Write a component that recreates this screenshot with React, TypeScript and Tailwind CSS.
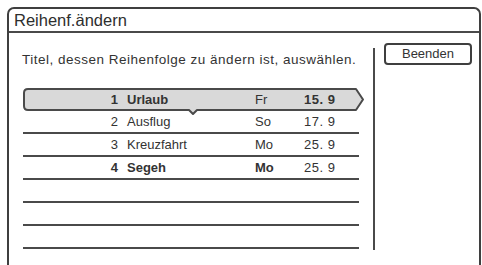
const rows = [
  { no: 1, name: "Urlaub", day: "Fr", date: "15. 9", boldName: true, boldDay: false, boldDate: true },
  { no: 2, name: "Ausflug", day: "So", date: "17. 9", boldName: false, boldDay: false, boldDate: false },
  { no: 3, name: "Kreuzfahrt", day: "Mo", date: "25. 9", boldName: false, boldDay: false, boldDate: false },
  { no: 4, name: "Segeh", day: "Mo", date: "25. 9", boldName: true, boldDay: true, boldDate: false },
];

function Highlight() {
  return (
    <svg
      className="absolute left-0 top-0 overflow-visible"
      width="342"
      height="24"
      viewBox="0 0 342 24"
    >
      <path
        d="M5 1 H333 L340 11.5 L333 22 H174 L170 26 L166 22 H5 Q1 22 1 18 V5 Q1 1 5 1 Z"
        fill="#d9d9d9"
        stroke="#4a4a4a"
        strokeWidth="2"
        strokeLinejoin="round"
      />
    </svg>
  );
}

function Row({ r, selected }: { r: (typeof rows)[number]; selected: boolean }) {
  return (
    <div
      className={
        "relative flex h-[23px] items-center text-[13px] text-[#333] " +
        (selected ? "" : "border-b-2 border-[#4a4a4a]")
      }
    >
      {selected && <Highlight />}
      <span className={"relative w-[95px] text-right " + (r.boldName ? "font-bold" : "")}>{r.no}</span>
      <span className={"relative ml-[9px] w-[128px] " + (r.boldName ? "font-bold" : "")}>{r.name}</span>
      <span className={"relative w-[49px] " + (r.boldDay ? "font-bold" : "")}>{r.day}</span>
      <span className={"relative tracking-[0.5px] " + (r.boldDate ? "font-bold" : "")}>{r.date}</span>
    </div>
  );
}

export default function App() {
  return (
    <div className="h-[265px] w-[482px] overflow-hidden bg-white pl-[7px] pt-[7px] font-['Liberation_Sans',Arial,sans-serif]">
      <div className="h-[280px] w-[474px] rounded-t-[7px] border-2 border-b-0 border-[#3f3f3f]">
        <div className="flex h-[24px] items-center border-b-2 border-[#4a4a4a] px-[5px] text-[16.5px] text-[#2e2e2e]">
          Reihenf.ändern
        </div>
        <div className="flex">
          <div className="w-[364px] pl-[13px] pt-[19px]">
            <p className="text-[13.5px] leading-[16px] tracking-[0.5px] text-[#333]">
              Titel, dessen Reihenfolge zu ändern ist, auswählen.
            </p>
            <div className="ml-[1px] mt-[20px] w-[336px]">
              {rows.map((r, i) => (
                <Row key={r.no} r={r} selected={i === 0} />
              ))}
              <div className="h-[23px] border-b-2 border-[#4a4a4a]" />
              <div className="h-[23px] border-b-2 border-[#4a4a4a]" />
              <div className="h-[23px] border-b-2 border-[#4a4a4a]" />
            </div>
          </div>
          <div className="mt-[15px] h-[202px] w-[2px] bg-[#4a4a4a]" />
          <div className="flex-1 pl-[9px] pt-[10px]">
            <button className="flex h-[22px] w-[88px] items-center justify-center rounded-[4px] border-2 border-[#3f3f3f] text-[13px] text-[#333]">
              Beenden
            </button>
          </div>
        </div>
      </div>
    </div>
  );
}
